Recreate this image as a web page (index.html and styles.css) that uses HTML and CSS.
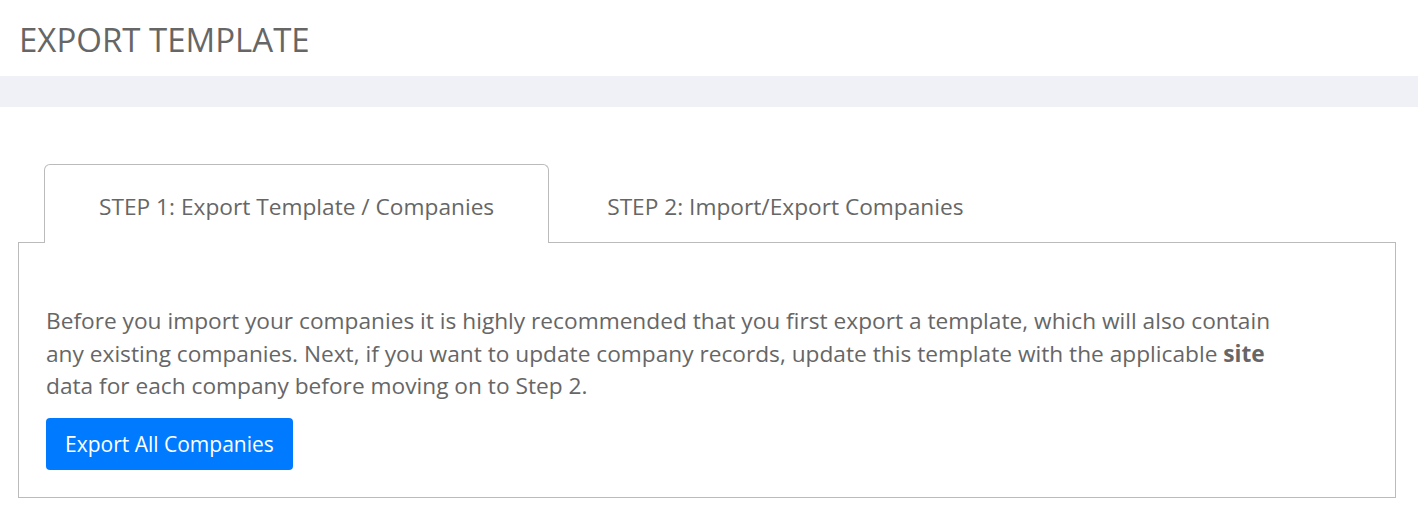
FILE: index.html
```html
<!DOCTYPE html>
<html>
<head>
<meta charset="utf-8">
<link rel="stylesheet" href="styles.css">
</head>
<body>
<header class="page-header">
  <h1 class="page-title">EXPORT TEMPLATE</h1>
</header>
<div class="band"></div>
<main class="content">
  <nav class="tabs">
    <div class="tab active">STEP 1: Export Template / Companies</div>
    <div class="tab">STEP 2: Import/Export Companies</div>
  </nav>
  <section class="panel">
    <p class="desc">Before you import your companies it is highly recommended that you first export a template, which will also contain any existing companies. Next, if you want to update company records, update this template with the applicable <strong>site</strong> data for each company before moving on to Step 2.</p>
    <button class="btn-primary">Export All Companies</button>
  </section>
</main>
</body>
</html>
```

FILE: styles.css
```css
* { box-sizing: border-box; }
body {
  margin: 0;
  font-family: "Open Sans", "Noto Sans", sans-serif;
  color: #666;
  background: #fff;
}
.page-header {
  height: 76px;
  padding: 2px 19px 0;
  display: flex;
  align-items: center;
}
.page-title {
  margin: 0;
  font-size: 33px;
  font-weight: 400;
  color: #666;
}
.band {
  height: 31px;
  background: #f0f1f6;
}
.content {
  padding: 57px 22px 0 18px;
}
.tabs {
  display: flex;
  padding-left: 26px;
  margin-bottom: -1px;
  position: relative;
  z-index: 1;
}
.tab {
  height: 79px;
  padding: 4px 54px 0;
  display: flex;
  align-items: center;
  font-size: 22.7px;
  color: #666;
  border: 1px solid transparent;
  border-bottom: none;
  border-radius: 6px 6px 0 0;
}
.tab.active {
  border-color: #bbb;
  background: #fff;
}
.tab + .tab {
  padding-left: 57px;
}
.panel {
  border: 1px solid #bbb;
  padding: 62px 27px 27px;
  height: 256px;
}
.desc {
  margin: 0 0 15px;
  font-size: 22.7px;
  line-height: 32.5px;
  max-width: 1240px;
}
.desc strong { font-weight: 700; }
.btn-primary {
  display: block;
  font-family: inherit;
  font-size: 21px;
  color: #fff;
  background: #007bff;
  border: none;
  border-radius: 4px;
  height: 52px;
  padding: 0 19px;
  cursor: pointer;
}
```
